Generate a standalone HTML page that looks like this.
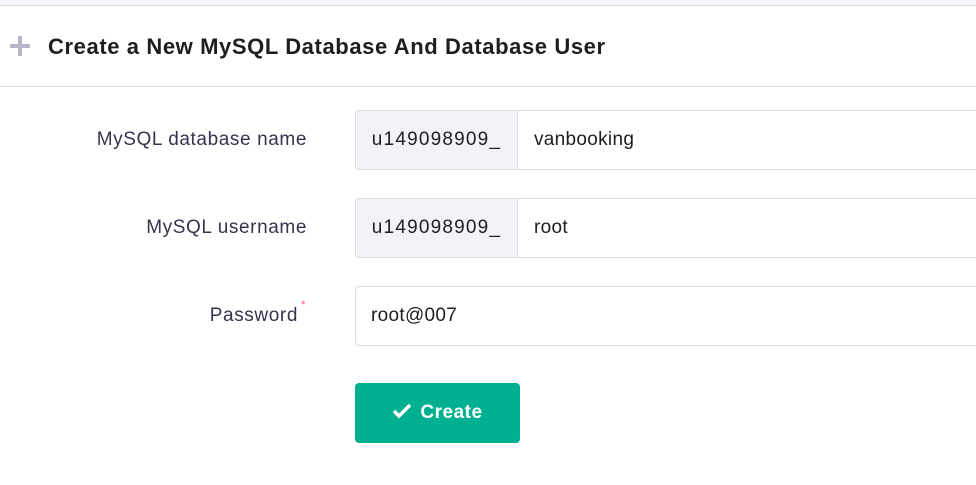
<!DOCTYPE html><html><head><style>
body{margin:0;width:976px;height:485px;overflow:hidden;background:#fff;font-family:"Liberation Sans",sans-serif;color:#2f1c6a;}
.top{height:5px;background:#f4f4fc;border-bottom:1px solid #dadce0;}
.hd{height:80px;border-bottom:1px solid #dadce0;position:relative;}
.hd .p{position:absolute;left:10px;top:38px;width:20px;height:4px;background:#b7b3c8;border-radius:1px}
.hd .p2{position:absolute;left:18px;top:30px;width:4px;height:20px;background:#b7b3c8;border-radius:1px}
.hd h1{position:absolute;left:48px;top:28px;margin:0;font-size:22px;letter-spacing:0.6px;font-weight:bold;color:#1d1e20;}
.lab{position:absolute;right:669px;font-size:19px;letter-spacing:0.6px;color:#36344d;}
.box{position:absolute;left:355px;width:640px;height:58px;border:1px solid #dadce0;border-radius:4px;font-size:19px;letter-spacing:0.3px;color:#1d1e20;}
.pre{position:absolute;left:0;top:0;width:161px;height:58px;background:#f2f3f6;border-right:1px solid #dadce0;line-height:58px;text-align:center;border-radius:4px 0 0 4px;letter-spacing:1.2px}
.val{position:absolute;top:0;line-height:58px}
.btn{position:absolute;left:355px;top:383px;width:165px;height:60px;background:#00b090;border-radius:4px;color:#fff;font-weight:bold;font-size:19px;letter-spacing:0.5px;line-height:60px;text-align:center}
</style></head><body>
<div class="top"></div>
<div class="hd"><div class="p"></div><div class="p2"></div><h1>Create a New MySQL Database And Database User</h1></div>
<div class="lab" style="top:129px">MySQL database name</div>
<div class="box" style="top:110px"><div class="pre">u149098909_</div><div class="val" style="left:178px">vanbooking</div></div>
<div class="lab" style="top:217px">MySQL username</div>
<div class="box" style="top:198px"><div class="pre">u149098909_</div><div class="val" style="left:178px">root</div></div>
<div class="lab" style="top:305px;right:678px">Password<sup style="color:#fc5185;font-size:11px;position:absolute;top:-6px;right:-8px">*</sup></div>
<div class="box" style="top:286px"><div class="val" style="left:15px">root@007</div></div>
<div class="btn"><svg width="20" height="16" viewBox="0 0 20 16" style="vertical-align:-1px;margin-right:8px"><path d="M2 8l5 5L18 2" stroke="#fff" stroke-width="3.5" fill="none"/></svg>Create</div>
</body></html>
